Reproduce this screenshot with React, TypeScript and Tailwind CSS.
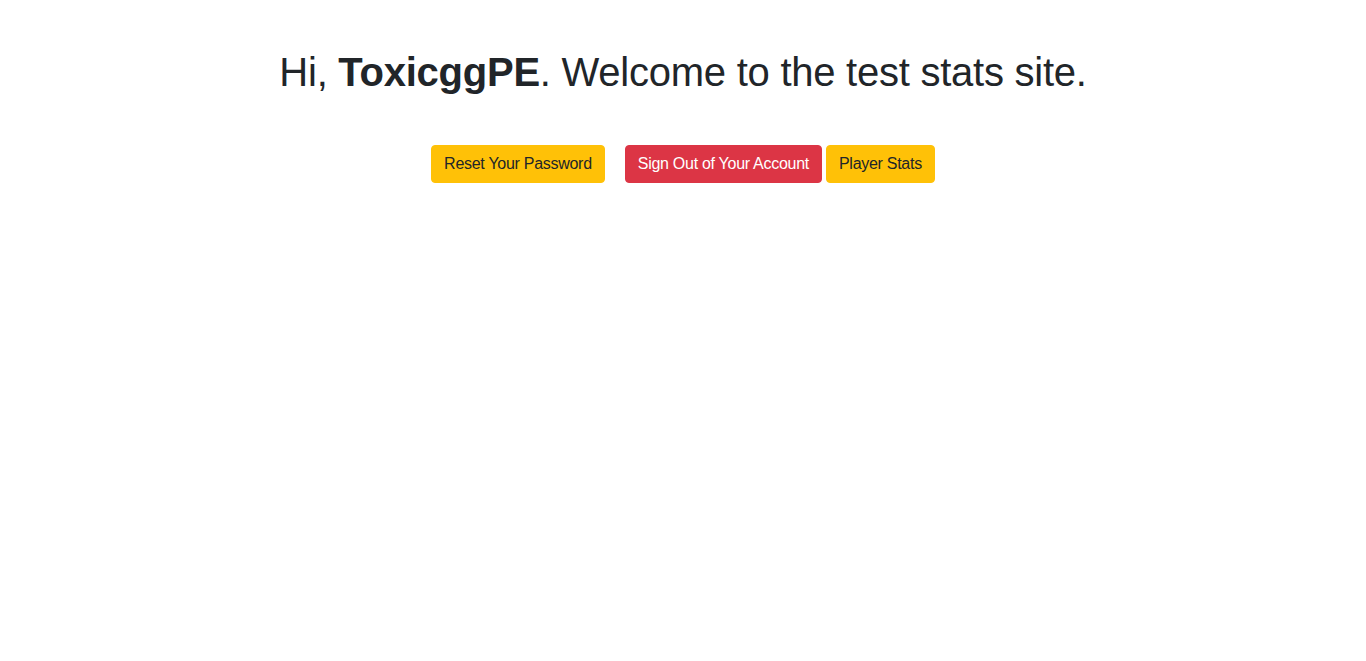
export default function App() {
  return (
    <div className="min-h-[661px] bg-white text-center text-[#212529]" style={{ fontFamily: '"Liberation Sans", Arial, sans-serif' }}>
      <div className="pt-12">
        <h1 className="text-[40px] leading-[1.2] font-normal tracking-[-0.25px]">
          Hi, <b className="font-bold">ToxicggPE</b>. Welcome to the test stats site.
        </h1>
        <div className="mt-[49px] flex justify-center tracking-[-0.28px]">
          <button className="rounded-[4px] border border-[#ffc107] bg-[#ffc107] px-3 py-[6px] text-base leading-6 text-[#212529]">
            Reset Your Password
          </button>
          <button className="ml-5 rounded-[4px] border border-[#dc3545] bg-[#dc3545] px-3 py-[6px] text-base leading-6 text-white">
            Sign Out of Your Account
          </button>
          <button className="ml-1 rounded-[4px] border border-[#ffc107] bg-[#ffc107] px-3 py-[6px] text-base leading-6 text-[#212529]">
            Player Stats
          </button>
        </div>
      </div>
    </div>
  );
}
